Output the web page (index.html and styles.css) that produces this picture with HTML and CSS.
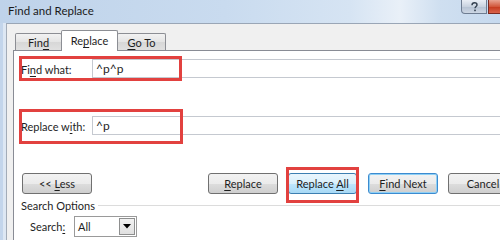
FILE: index.html
```html
<!DOCTYPE html>
<html>
<head>
<meta charset="utf-8">
<link rel="stylesheet" href="styles.css">
</head>
<body>
<div class="window">
  <div class="titlebar">
    <span class="title">Find and Replace</span>
    <div class="caption">
      <div class="cap-help"><svg width="9" height="10" viewBox="0 0 9 10"><path d="M2 3.2 C2 1.4 3.4 0.8 4.6 0.8 C6 0.8 7 1.7 7 2.9 C7 4.4 5 4.6 5 6.3" fill="none" stroke="#33404f" stroke-width="1.4"/><rect x="4.2" y="7.6" width="1.6" height="1.6" fill="#33404f"/></svg></div>
      <div class="cap-close"></div>
    </div>
  </div>
  <div class="frame">
    <div class="client">
      <div class="tabs">
        <div class="tab"><span>Fin<u>d</u></span></div>
        <div class="tab active"><span>Re<u>p</u>lace</span></div>
        <div class="tab"><span><u>G</u>o To</span></div>
      </div>
      <div class="panel">
        <div class="row row-find">
          <span class="label">Fi<u>n</u>d what:</span>
          <div class="input">^p^p</div>
          <span class="mark mark-find"></span>
        </div>
        <div class="row row-replace">
          <span class="label">Replace w<u>i</u>th:</span>
          <div class="input">^p</div>
          <span class="mark mark-replace"></span>
        </div>
        <div class="buttons">
          <div class="btn btn-less"><span>&lt;&lt; <u>L</u>ess</span></div>
          <div class="btn btn-replace"><span><u>R</u>eplace</span></div>
          <div class="btn btn-all"><span>Replace <u>A</u>ll</span><span class="mark mark-all"></span></div>
          <div class="btn btn-next"><span><u>F</u>ind Next</span></div>
          <div class="btn btn-cancel"><span>Cancel</span></div>
        </div>
        <div class="group-title"><span>Search Options</span><span class="rule"></span></div>
        <div class="search-row">
          <span class="search-label">Search<u>:</u></span>
          <div class="select"><span class="sel-text">All</span><span class="sel-btn"><svg width="8" height="5" viewBox="0 0 8 5"><path d="M0 0 H8 L4 4.5 Z" fill="#000"/></svg></span></div>
        </div>
      </div>
    </div>
  </div>
</div>
</body>
</html>
```
FILE: styles.css
```css
html, body {
  margin: 0;
  padding: 0;
}
body {
  width: 500px;
  height: 240px;
  overflow: hidden;
  font-family: Lato, "Noto Sans", sans-serif;
  font-size: 11px;
  color: #1e1e1e;
}
u { text-decoration: underline; text-underline-offset: 2px; }
.window {
  width: 500px;
  height: 240px;
  overflow: hidden;
  display: flex;
  flex-direction: column;
  background: #d9e5f2;
}
.titlebar {
  height: 23px;
  flex: none;
  display: flex;
  align-items: flex-start;
  background: linear-gradient(to right, #bfd3ea 0%, #c9dbef 45%, #d6e4f3 70%, #e9f0f8 80%, #cfdff0 88%, #c6d9ee 100%);
}
.title {
  padding-left: 8px;
  padding-top: 4px;
  font-size: 11.5px;
  color: #1a1a1a;
  white-space: nowrap;
}
.caption {
  margin-left: auto;
  display: flex;
  flex: none;
  width: 39px;
  overflow: hidden;
}
.cap-help {
  flex: none;
  width: 24px;
  height: 13px;
  border: 1px solid #6e7d92;
  border-top: none;
  border-radius: 0 0 0 4px;
  background: linear-gradient(#e9eef5, #c9d3e0 50%, #b5c2d3 51%, #cdd7e4);
  display: flex;
  align-items: center;
  justify-content: center;
}
.cap-close {
  flex: none;
  width: 45px;
  height: 13px;
  margin-left: 1px;
  border: 1px solid #7b2a22;
  border-top: none;
  background: linear-gradient(#e8a392, #d2583d 50%, #c4381c 51%, #d9624a);
}
.frame {
  flex: 1;
  display: flex;
  padding-left: 6px;
  background: linear-gradient(to right, #c3d5eb 0, #c3d5eb 3px, #dde7f3 3px);
}
.client {
  flex: 1;
  min-width: 0;
  display: flex;
  flex-direction: column;
  background: #f0f0f0;
  border-left: 1px solid #a3acb8;
  border-top: 1px solid #9aa6b6;
  padding-left: 6px;
}
.tabs {
  height: 20px;
  margin-top: 6px;
  padding-left: 2px;
  display: flex;
  align-items: flex-end;
}
.tab {
  height: 17px;
  border: 1px solid #8c8e94;
  border-bottom: none;
  border-radius: 2px 2px 0 0;
  background: linear-gradient(#f2f2f2, #e4e4e4 50%, #d7d7d7 51%, #e0e0e0);
  display: flex;
  justify-content: center;
  align-items: center;
  box-sizing: border-box;
  padding-top: 1px;
  white-space: nowrap;
}
.tab:nth-child(1) { width: 47px; }
.tab.active {
  width: 57px;
  height: 21px;
  background: #fff;
  margin-bottom: -1px;
  margin-left: -1px;
  margin-right: -1px;
  position: relative;
  z-index: 1;
  padding-bottom: 2px;
}
.tab:nth-child(3) { width: 49px; }
.panel {
  flex: 1;
  background: #fff;
  border-left: 1px solid #898c95;
  border-top: 1px solid #898c95;
  padding-left: 7px;
}
.row {
  position: relative;
  display: flex;
  align-items: center;
  height: 19px;
}
.row-find { margin-top: 8px; }
.row-replace { margin-top: 38px; }
.label {
  width: 71px;
  flex: none;
  padding-top: 1px;
  white-space: nowrap;
}
.input {
  flex: 1;
  height: 19px;
  box-sizing: border-box;
  border: 1px solid #c5c9d0;
  border-right: none;
  padding-left: 3px;
  display: flex;
  align-items: center;
  font-size: 12px;
}
.mark {
  position: absolute;
  border: 3px solid #e2413f;
  box-sizing: border-box;
  pointer-events: none;
}
.mark-find {
  left: -2px;
  top: -3px;
  width: 163px;
  height: 25px;
}
.mark-replace {
  left: -2px;
  top: -7px;
  width: 164px;
  height: 35px;
}
.buttons {
  display: flex;
  margin-top: 38px;
  height: 21px;
}
.btn {
  position: relative;
  width: 70px;
  height: 21px;
  box-sizing: border-box;
  flex: none;
  border: 1px solid #707070;
  border-radius: 3px;
  background: linear-gradient(#f2f2f2, #ebebeb 50%, #dddddd 51%, #cfcfcf);
  display: flex;
  align-items: center;
  justify-content: center;
  white-space: pre;
}
.btn-less { margin-left: 1px; }
.btn-replace { margin-left: 116px; }
.btn-all {
  margin-left: 10px;
  width: 69px;
  border-color: #3c7fb1;
  background: linear-gradient(#eaf6fd, #d9f0fc 50%, #bee6fd 51%, #a7d9f5);
}
.btn-next {
  margin-left: 11px;
  border-color: #3c8bd0;
  box-shadow: inset 0 0 0 1px #8fd0f5;
}
.btn-cancel { margin-left: 10px; }
.mark-all {
  left: -3px;
  top: -7px;
  width: 73px;
  height: 36px;
}
.group-title {
  display: flex;
  align-items: center;
  margin-top: 3px;
  height: 16px;
  white-space: nowrap;
}
.rule {
  flex: 1;
  height: 1px;
  margin-left: 3px;
  background: #dcdcdc;
}
.search-row {
  display: flex;
  align-items: center;
  margin-top: 3px;
  height: 21px;
}
.search-label {
  width: 44px;
  padding-left: 9px;
  flex: none;
}
.select {
  width: 63px;
  height: 21px;
  box-sizing: border-box;
  border: 1px solid #9a9a9a;
  display: flex;
  align-items: center;
  background: #fff;
}
.sel-text {
  flex: 1;
  padding-left: 3px;
}
.sel-btn {
  width: 16px;
  height: 17px;
  margin-right: 1px;
  box-sizing: border-box;
  border: 1px solid #8e8f8f;
  background: linear-gradient(#f2f2f2, #e0e0e0);
  display: flex;
  align-items: center;
  justify-content: center;
}
```
